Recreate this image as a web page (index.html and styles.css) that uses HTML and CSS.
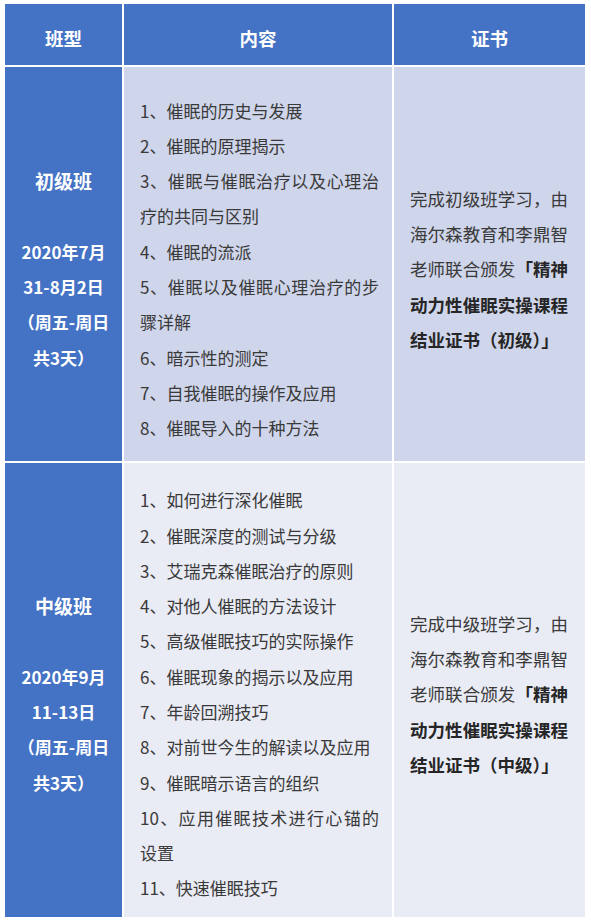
FILE: index.html
```html
<!DOCTYPE html>
<html lang="zh-CN">
<head>
<meta charset="utf-8">
<title>课程表</title>
<link rel="stylesheet" href="styles.css">
</head>
<body>
<div class="table">
  <div class="cell head">班型</div>
  <div class="cell head">内容</div>
  <div class="cell head">证书</div>

  <div class="cell cls r1">
    <div class="cls-name">初级班</div>
    <div class="blank">&nbsp;</div>
    <div>2020年7月</div>
    <div>31-8月2日</div>
    <div>（周五-周日</div>
    <div>共3天）</div>
  </div>
  <div class="cell content r1 odd">
    <p>1、催眠的历史与发展</p>
    <p>2、催眠的原理揭示</p>
    <p>3、催眠与催眠治疗以及心理治疗的共同与区别</p>
    <p>4、催眠的流派</p>
    <p>5、催眠以及催眠心理治疗的步骤详解</p>
    <p>6、暗示性的测定</p>
    <p>7、自我催眠的操作及应用</p>
    <p>8、催眠导入的十种方法</p>
  </div>
  <div class="cell cert r1 odd">
    <p>完成初级班学习，由海尔森教育和李鼎智老师联合颁发<b>「精神动力性催眠实操课程结业证书（初级）」</b></p>
  </div>

  <div class="cell cls r2">
    <div class="cls-name">中级班</div>
    <div class="blank">&nbsp;</div>
    <div>2020年9月</div>
    <div>11-13日</div>
    <div>（周五-周日</div>
    <div>共3天）</div>
  </div>
  <div class="cell content r2 even">
    <p>1、如何进行深化催眠</p>
    <p>2、催眠深度的测试与分级</p>
    <p>3、艾瑞克森催眠治疗的原则</p>
    <p>4、对他人催眠的方法设计</p>
    <p>5、高级催眠技巧的实际操作</p>
    <p>6、催眠现象的揭示以及应用</p>
    <p>7、年龄回溯技巧</p>
    <p>8、对前世今生的解读以及应用</p>
    <p>9、催眠暗示语言的组织</p>
    <p>10、应用催眠技术进行心锚的设置</p>
    <p>11、快速催眠技巧</p>
  </div>
  <div class="cell cert r2 even">
    <p>完成中级班学习，由海尔森教育和李鼎智老师联合颁发<b>「精神动力性催眠实操课程结业证书（中级）」</b></p>
  </div>
</div>
</body>
</html>
```

FILE: styles.css
```css
html, body {
  margin: 0;
  padding: 0;
  background: #ffffff;
}

body {
  font-family: "Noto Sans CJK SC", "Noto Sans", sans-serif;
  padding: 4px 0 0 5px;
}

.table {
  display: grid;
  grid-template-columns: 117px 268px 191px;
  grid-template-rows: 61px 394px 454px;
  column-gap: 2px;
  row-gap: 2px;
}

.cell {
  display: flex;
  flex-direction: column;
  justify-content: center;
  box-sizing: border-box;
  line-height: 35.3px;
}

.cell p {
  margin: 0;
}

.head {
  background: #4472c4;
  color: #ffffff;
  font-weight: bold;
  font-size: 18.5px;
  text-align: center;
  padding-top: 9px;
}

.r1 {
  padding-top: 10px;
}

.r2 {
  padding-top: 8px;
}

.cls {
  background: #4472c4;
  color: #ffffff;
  font-weight: bold;
  font-size: 17px;
  text-align: center;
}

.cls-name {
  font-size: 19px;
}

.odd {
  background: #cfd5ea;
}

.even {
  background: #e9ebf5;
}

.content {
  color: #3a3a3a;
  font-size: 17px;
  text-align: justify;
  padding-left: 16px;
  padding-right: 13px;
}

.cert {
  color: #3a3a3a;
  font-size: 17.5px;
  text-align: justify;
  padding-left: 16px;
  padding-right: 17px;
}

.cert b {
  color: #262626;
}
```
